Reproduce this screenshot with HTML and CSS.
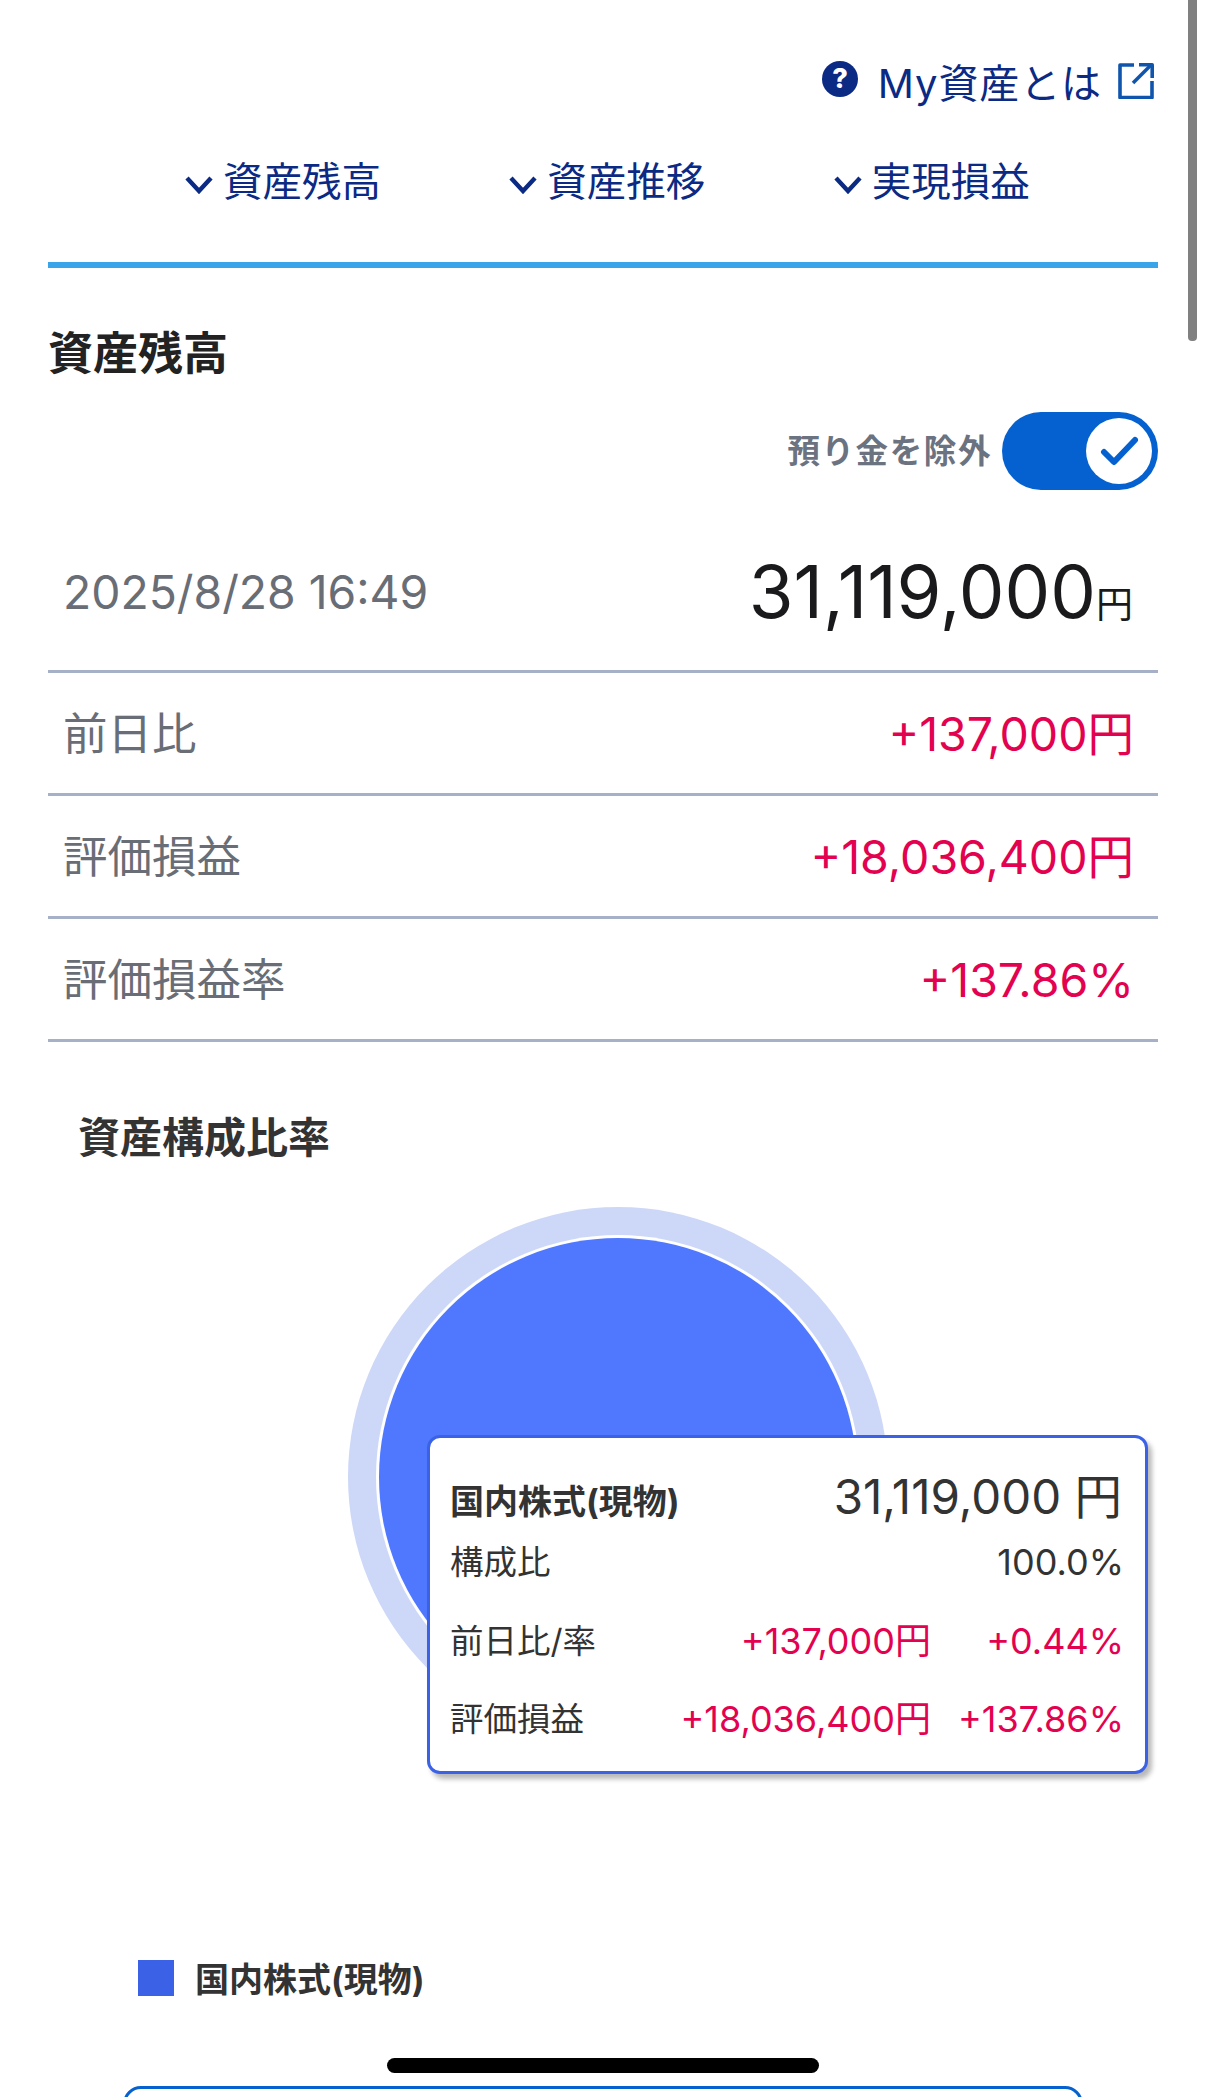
FILE: index.html
```html
<!DOCTYPE html>
<html lang="ja">
<head>
<meta charset="UTF-8">
<title>My資産</title>
<link rel="stylesheet" href="styles.css">
</head>
<body>
<div class="page">
    <div class="help-row">
        <svg class="help-icon" viewBox="0 0 36 36"><circle cx="18" cy="18" r="18" fill="#0b2a84"/><text x="18" y="27" text-anchor="middle" class="help-mark">?</text></svg>
        <span class="help-text">My資産とは</span>
        <svg class="ext-icon" viewBox="0 0 36 36" fill="none" stroke="#0f55ad" stroke-width="3.6" stroke-linejoin="round"><path d="M16 2H2v32.5h32V18"/><path d="M15 20 33 2"/><path d="M21 1.8h13.2V15"/></svg>
    </div>

    <div class="tabs">
        <a class="tab"><svg class="chevron" viewBox="0 0 28 18" fill="none" stroke="#0b2a84" stroke-width="4.4"><path d="M2 2l12 13L26 2"/></svg>資産残高</a>
        <a class="tab"><svg class="chevron" viewBox="0 0 28 18" fill="none" stroke="#0b2a84" stroke-width="4.4"><path d="M2 2l12 13L26 2"/></svg>資産推移</a>
        <a class="tab"><svg class="chevron" viewBox="0 0 28 18" fill="none" stroke="#0b2a84" stroke-width="4.4"><path d="M2 2l12 13L26 2"/></svg>実現損益</a>
    </div>

    <h2 class="section-title">資産残高</h2>

    <div class="toggle-row">
        <span class="toggle-label">預り金を除外</span>
        <div class="toggle">
            <div class="knob">
                <svg viewBox="0 0 40 32" width="40" height="32" fill="none" stroke="#0461cf" stroke-width="6" stroke-linecap="round" stroke-linejoin="round"><path d="M5 17l10 10L36 5"/></svg>
            </div>
        </div>
    </div>

    <div class="row row-total">
        <span class="date">2025/8/28 16:49</span>
        <span class="total">31,119,000<small>円</small></span>
    </div>
    <div class="row">
        <span class="label">前日比</span>
        <span class="plus">+137,000円</span>
    </div>
    <div class="row">
        <span class="label">評価損益</span>
        <span class="plus">+18,036,400円</span>
    </div>
    <div class="row">
        <span class="label">評価損益率</span>
        <span class="plus">+137.86%</span>
    </div>

    <h3 class="chart-title">資産構成比率</h3>

    <div class="chart">
        <svg class="donut" viewBox="0 0 540 540">
            <circle cx="270" cy="270" r="270" fill="#cdd8f8"/>
            <circle cx="270" cy="270" r="242" fill="#fff"/>
            <circle cx="270" cy="270" r="239" fill="#5078ff"/>
        </svg>
        <div class="tooltip">
            <div class="tip-row tip-head">
                <b>国内株式(現物)</b>
                <span class="tip-amount">31,119,000 円</span>
            </div>
            <div class="tip-row tip-share">
                <span>構成比</span>
                <span class="tip-num">100.0%</span>
            </div>
            <div class="tip-row tip-line">
                <span class="tip-name">前日比/率</span>
                <span class="plus tip-val">+137,000円</span>
                <span class="plus tip-pct">+0.44%</span>
            </div>
            <div class="tip-row tip-line">
                <span class="tip-name">評価損益</span>
                <span class="plus tip-val">+18,036,400円</span>
                <span class="plus tip-pct">+137.86%</span>
            </div>
        </div>
    </div>

    <div class="legend">
        <span class="swatch"></span>
        <b>国内株式(現物)</b>
    </div>

    <div class="next-card"></div>

    <div class="scrollbar"></div>
    <div class="home-bar"></div>
</div>
</body>
</html>
```

FILE: styles.css
```css
* {
    box-sizing: border-box;
}
html, body {
    margin: 0;
    padding: 0;
    background-color: #fff;
}
.page {
    position: relative;
    width: 1206px;
    height: 2097px;
    padding: 0 48px;
    overflow: hidden;
    font-family: Inter, "Noto Sans CJK JP", sans-serif;
    color: #1a1a1c;
}

/* top links */
.help-row {
    display: flex;
    align-items: flex-start;
    justify-content: flex-end;
    height: 130px;
    padding: 61px 4px 0 0;
    color: #0b2a84;
}
.help-icon {
    width: 36px;
    height: 36px;
    margin-right: 20px;
}
.help-mark {
    font-family: Inter, sans-serif;
    font-size: 27px;
    font-weight: 800;
    fill: #fff;
}
.help-text {
    font-size: 40px;
    line-height: 46px;
    letter-spacing: 0.9px;
}
.ext-icon {
    width: 36px;
    height: 36px;
    margin: 2px 0 0 16px;
}
.tabs {
    display: flex;
    height: 138px;
    padding: 30px 0 0 137px;
    border-bottom: 6px solid #3aa4ea;
}
.tab {
    display: flex;
    align-items: flex-start;
    width: 325px;
    font-size: 39.5px;
    line-height: 44px;
    color: #0b2a84;
}
.chevron {
    width: 28px;
    height: 18px;
    margin: 16px 10px 0 0;
}

/* balance */
.section-title {
    margin: 54px 0 0;
    font-size: 45px;
    line-height: 64px;
    font-weight: 700;
    color: #222;
}
.toggle-row {
    display: flex;
    align-items: center;
    justify-content: flex-end;
    gap: 10px;
    margin-top: 26px;
}
.toggle-label {
    margin-top: -5px;
    font-size: 32.5px;
    font-weight: 700;
    letter-spacing: 1.6px;
    color: #6b7280;
}
.toggle {
    display: flex;
    justify-content: flex-end;
    align-items: center;
    width: 156px;
    height: 78px;
    padding-right: 6px;
    border-radius: 39px;
    background-color: #0461cf;
}
.knob {
    display: flex;
    align-items: center;
    justify-content: center;
    width: 66px;
    height: 66px;
    border-radius: 50%;
    background-color: #fff;
}
.row {
    display: flex;
    align-items: center;
    justify-content: space-between;
    height: 123px;
    padding: 2px 24px 0 15px;
    border-bottom: 3px solid #a6b0c6;
    font-size: 46.5px;
    line-height: 60px;
}
.row-total {
    height: 183px;
    padding-top: 24px;
}
.date {
    font-size: 46.3px;
    color: #696d75;
}
.total {
    margin-top: 13px;
    font-size: 72.5px;
}
.total small {
    font-size: 37px;
    margin-right: 1px;
}
.label {
    font-size: 44.5px;
    color: #696d75;
}
.plus {
    color: #e3024f;
}

/* chart */
.chart-title {
    margin: 66px 0 0 30px;
    font-size: 42px;
    line-height: 60px;
    font-weight: 700;
    color: #333;
}
.chart {
    position: relative;
    height: 785px;
}
.donut {
    position: absolute;
    left: 300px;
    top: 39px;
    width: 540px;
    height: 540px;
}
.tooltip {
    position: absolute;
    left: 379px;
    top: 267px;
    width: 721px;
    height: 339px;
    padding: 34px 23px 0 20px;
    border: 3px solid #3b62e6;
    border-radius: 13px;
    background-color: #fff;
    box-shadow: 4px 5px 5px rgba(0, 0, 0, 0.28);
    color: #333;
}
.tip-row {
    display: flex;
    align-items: center;
}
.tip-head {
    justify-content: space-between;
    height: 48px;
}
.tip-head b {
    font-size: 34px;
    font-weight: 700;
    margin-top: 6px;
}
.tip-amount {
    margin-top: -6px;
    font-size: 47.5px;
}
.tip-share {
    justify-content: space-between;
    height: 44px;
    margin-top: 20px;
    font-size: 33.5px;
    line-height: 44px;
}
.tip-num {
    margin-right: -2px;
    font-size: 36px;
}
.tip-line {
    height: 44px;
    margin-top: 34px;
    font-size: 33.5px;
    line-height: 44px;
}
.tip-line:nth-child(3) {
    margin-top: 35px;
}
.tip-name {
    margin-right: auto;
}
.tip-val {
    font-size: 36px;
    text-align: right;
}
.tip-pct {
    width: 193px;
    margin-right: -2px;
    font-size: 36px;
    text-align: right;
}

/* legend and the card below */
.legend {
    display: flex;
    align-items: center;
    gap: 21px;
    margin-left: 90px;
    font-size: 34px;
    color: #333;
}
.swatch {
    width: 36px;
    height: 36px;
    background-color: #3b62e6;
}
.next-card {
    position: absolute;
    left: 123px;
    top: 2086px;
    width: 960px;
    height: 200px;
    border: 3px solid #0461cf;
    border-radius: 18px;
}

/* device chrome lying over the page */
.scrollbar {
    position: absolute;
    left: 1188px;
    top: 0;
    width: 9px;
    height: 341px;
    border-radius: 0 0 4px 4px;
    background-color: #808080;
}
.home-bar {
    position: absolute;
    left: 387px;
    top: 2058px;
    width: 432px;
    height: 15px;
    border-radius: 8px;
    background-color: #000;
}
```
